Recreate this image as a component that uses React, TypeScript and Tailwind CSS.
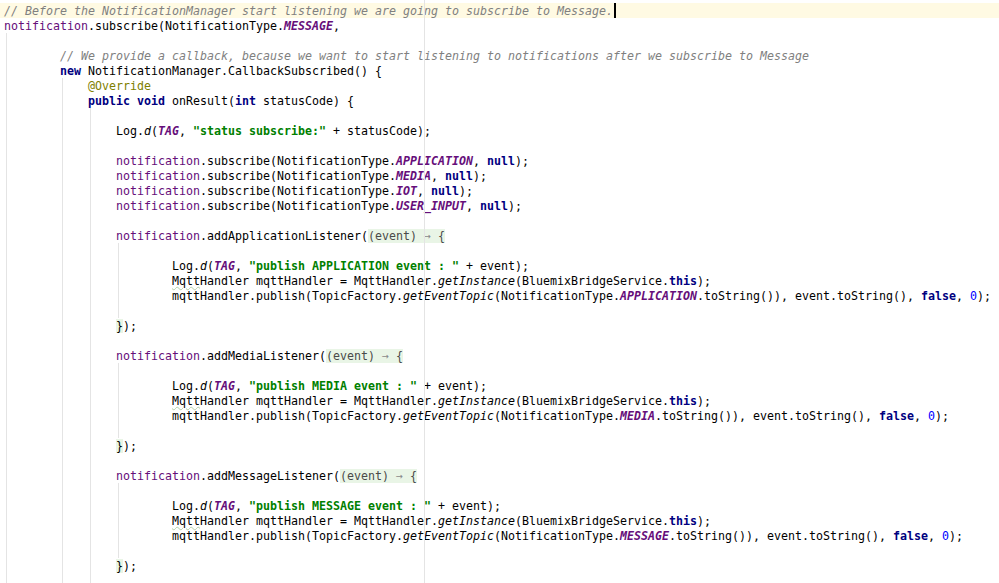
import React from 'react';

type Tok = [string, string?];

const K = 'font-bold text-[#000080]';
const SF = 'font-bold italic text-[#660e7a]';
const F = 'text-[#660e7a]';
const S = 'font-bold text-[#008000]';
const N = 'text-[#0000ff]';
const A = 'text-[#808000]';
const C = 'italic text-[#808080]';
const M = 'italic';
const FOLD = 'bg-[#e9f5e6] text-[#4a4a4a]';
const SQ = 'underline decoration-wavy decoration-[#b4cfa9] decoration-1 underline-offset-[1px]';

const i16 = ' '.repeat(16);
const i24 = ' '.repeat(24);

const subscribe = (t: string): Tok[] => [
  [i16],
  ['notification', F],
  ['.subscribe(NotificationType.'],
  [t, SF],
  [', '],
  ['null', K],
  [');'],
];

const listener = (name: string): Tok[] => [
  [i16],
  ['notification', F],
  [`.add${name}Listener(`],
  ['(event) ', FOLD],
  ['→', 'bg-[#e9f5e6] text-[#8a8a8a]'],
  [' {', FOLD],
];

const logLine = (t: string): Tok[] => [
  [i24 + 'Log.'],
  ['d', M],
  ['('],
  ['TAG', SF],
  [', '],
  [`"publish ${t} event : "`, S],
  [' + event);'],
];

const handlerLine: Tok[] = [
  [i24],
  ['Mqtt', SQ],
  ['Handler mqttHandler = MqttHandler.'],
  ['getInstance', M],
  ['(BluemixBridgeService.'],
  ['this', K],
  [');'],
];

const publishLine = (t: string): Tok[] => [
  [i24 + 'mqttHandler.publish(TopicFactory.'],
  ['getEventTopic', M],
  ['(NotificationType.'],
  [t, SF],
  ['.toString()), event.toString(), '],
  ['false', K],
  [', '],
  ['0', N],
  [');'],
];

const closeLine: Tok[] = [[i16], ['}', 'bg-[#e9f5e6]'], [');']];

const block = (name: string, t: string): Tok[][] => [
  listener(name),
  [],
  logLine(t),
  handlerLine,
  publishLine(t),
  [],
  closeLine,
  [],
];

const lines: Tok[][] = [
  [['// Before the NotificationManager start listening we are going to subscribe to Message.', C]],
  [['notification', F], ['.subscribe(NotificationType.'], ['MESSAGE', SF], [',']],
  [],
  [['        '], ['// We provide a callback, because we want to start listening to notifications after we subscribe to Message', C]],
  [['        '], ['new', K], [' NotificationManager.CallbackSubscribed() {']],
  [['            '], ['@Override', A]],
  [['            '], ['public', K], [' '], ['void', K], [' onResult('], ['int', K], [' statusCode) {']],
  [],
  [[i16 + 'Log.'], ['d', M], ['('], ['TAG', SF], [', '], ['"status subscribe:"', S], [' + statusCode);']],
  [],
  subscribe('APPLICATION'),
  subscribe('MEDIA'),
  subscribe('IOT'),
  subscribe('USER_INPUT'),
  [],
  ...block('Application', 'APPLICATION'),
  ...block('Media', 'MEDIA'),
  ...block('Message', 'MESSAGE'),
];

function Line({ toks, current }: { toks: Tok[]; current?: boolean }) {
  return (
    <div className={`flex h-[15px] items-start whitespace-pre pl-[4px] ${current ? 'bg-[#fffae3]' : ''}`}>
      <div className="leading-[17px]">
        {toks.map(([text, cls], i) => (
          <span key={i} className={cls}>
            {text}
          </span>
        ))}
      </div>
      {current && <span className="ml-[1px] h-[15px] w-[2px] bg-black" />}
    </div>
  );
}

export default function App() {
  return (
    <div className="relative h-[583px] w-full overflow-hidden bg-white pt-[3px] font-['DejaVu_Sans_Mono',monospace] text-[11.64px] text-black">
      {/* right margin + indent guides drawn over the text area */}
      <div className="absolute left-[424px] top-0 h-full w-px bg-[#e4e4e4]" />
      <div className="absolute left-[6px] top-[33px] bottom-0 w-px bg-[#e4e4e4]" />
      <div className="absolute left-[62px] top-[78px] bottom-0 w-px bg-[#e4e4e4]" />
      <div className="absolute left-[90px] top-[108px] bottom-0 w-px bg-[#e4e4e4]" />
      <div className="absolute left-[118px] top-[243px] h-[75px] w-px bg-[#e4e4e4]" />
      <div className="absolute left-[118px] top-[363px] h-[75px] w-px bg-[#e4e4e4]" />
      <div className="absolute left-[118px] top-[483px] h-[75px] w-px bg-[#e4e4e4]" />
      <div className="flex flex-col">
        {lines.map((toks, i) => (
          <Line key={i} toks={toks} current={i === 0} />
        ))}
      </div>
    </div>
  );
}
